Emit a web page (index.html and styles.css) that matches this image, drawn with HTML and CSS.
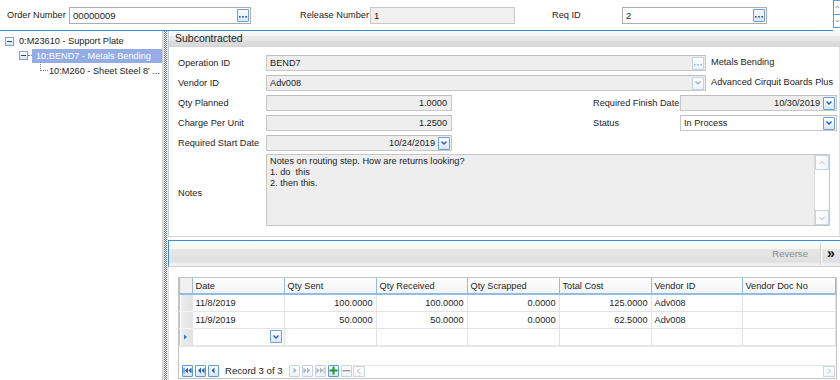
FILE: index.html
```html
<!DOCTYPE html>
<html lang="en">
<head>
<meta charset="utf-8">
<title>Subcontracted</title>
<link rel="stylesheet" href="styles.css">
</head>
<body>
<div class="app">
  <header class="top">
    <div class="topfields">
      <span class="tlbl l-order">Order Number</span>
      <div class="tinput w-order"><span class="val">00000009</span><span class="btn"><svg width="8" height="8" viewBox="0 0 8 8"><rect x="0" y="5" width="1.6" height="1.6" fill="#24508a"/><rect x="3.2" y="5" width="1.6" height="1.6" fill="#24508a"/><rect x="6.4" y="5" width="1.6" height="1.6" fill="#24508a"/></svg></span></div>
      <span class="tlbl l-rel">Release Number</span>
      <div class="tinput ro w-rel"><span class="val">1</span></div>
      <span class="tlbl l-req">Req ID</span>
      <div class="tinput w-req"><span class="val">2</span><span class="btn"><svg width="8" height="8" viewBox="0 0 8 8"><rect x="0" y="5" width="1.6" height="1.6" fill="#24508a"/><rect x="3.2" y="5" width="1.6" height="1.6" fill="#24508a"/><rect x="6.4" y="5" width="1.6" height="1.6" fill="#24508a"/></svg></span></div>
    </div>
    <div class="spin">
      <span class="sp"><svg width="6" height="6" viewBox="0 0 6 6"><polyline points="1,4 3,2 5,4" fill="none" stroke="#4a78b0" stroke-width="1"/></svg></span>
      <span class="sp"><svg width="6" height="6" viewBox="0 0 6 6"><polyline points="1,2 3,4 5,2" fill="none" stroke="#4a78b0" stroke-width="1"/></svg></span>
    </div>
  </header>

  <div class="main">
    <nav class="tree">
      <div class="node n0">
        <span class="exp"><i></i></span>
        <span class="ntext">0:M23610 - Support Plate</span>
      </div>
      <div class="node n1">
        <span class="exp"><i></i></span><span class="dash"></span>
        <span class="ntext sel">10:BEND7 - Metals Bending</span>
      </div>
      <div class="node n2">
        <span class="elbow"></span>
        <span class="ntext">10:M260 - Sheet Steel 8' ...</span>
      </div>
    </nav>
    <div class="splitter"></div>

    <section class="content">
      <div class="group">
        <div class="ghead">Subcontracted</div>
        <div class="gbody">
          <div class="frow">
            <span class="flbl">Operation ID</span>
            <div class="fin w-long"><span class="val">BEND7</span><span class="btn dis"><svg width="8" height="8" viewBox="0 0 8 8"><rect x="0" y="5" width="1.5" height="1.5" fill="#9aaabb"/><rect x="3.2" y="5" width="1.5" height="1.5" fill="#9aaabb"/><rect x="6.4" y="5" width="1.5" height="1.5" fill="#9aaabb"/></svg></span></div>
            <span class="side">Metals Bending</span>
          </div>
          <div class="frow">
            <span class="flbl">Vendor ID</span>
            <div class="fin w-long"><span class="val">Adv008</span><span class="btn dis"><svg width="8" height="8" viewBox="0 0 8 8"><polyline points="1.5,2.5 4,5 6.5,2.5" fill="none" stroke="#9aaabb" stroke-width="1.1"/></svg></span></div>
            <span class="side">Advanced Cirquit Boards Plus</span>
          </div>
          <div class="frow">
            <span class="flbl">Qty Planned</span>
            <div class="fin w-short num"><span class="val">1.0000</span></div>
            <span class="flbl rl">Required Finish Date</span>
            <div class="fin w-right num"><span class="val">10/30/2019</span><span class="btn dd"><svg width="8" height="8" viewBox="0 0 8 8"><polyline points="1.5,2.5 4,5 6.5,2.5" fill="none" stroke="#1f5ea8" stroke-width="1.3"/></svg></span></div>
          </div>
          <div class="frow">
            <span class="flbl">Charge Per Unit</span>
            <div class="fin w-short num"><span class="val">1.2500</span></div>
            <span class="flbl rl">Status</span>
            <div class="fin w-right white"><span class="val">In Process</span><span class="btn dd"><svg width="8" height="8" viewBox="0 0 8 8"><polyline points="1.5,2.5 4,5 6.5,2.5" fill="none" stroke="#1f5ea8" stroke-width="1.3"/></svg></span></div>
          </div>
          <div class="frow">
            <span class="flbl">Required Start Date</span>
            <div class="fin w-short num"><span class="val">10/24/2019</span><span class="btn dd"><svg width="8" height="8" viewBox="0 0 8 8"><polyline points="1.5,2.5 4,5 6.5,2.5" fill="none" stroke="#1f5ea8" stroke-width="1.3"/></svg></span></div>
          </div>
          <div class="nrow">
            <span class="flbl nlbl">Notes</span>
            <div class="notes">
              <div class="ntxt">Notes on routing step. How are returns looking?<br>1. do&nbsp; this<br>2. then this.</div>
              <div class="vscroll">
                <span class="sbtn"><svg width="8" height="8" viewBox="0 0 8 8"><polyline points="1.5,5 4,2.5 6.5,5" fill="none" stroke="#a9b8c8" stroke-width="1"/></svg></span>
                <span class="strack"></span>
                <span class="sbtn"><svg width="8" height="8" viewBox="0 0 8 8"><polyline points="1.5,3 4,5.5 6.5,3" fill="none" stroke="#a9b8c8" stroke-width="1"/></svg></span>
              </div>
            </div>
          </div>
        </div>
      </div>

      <div class="lower">
        <div class="toolbar">
          <span class="tbtn">Reverse</span>
          <span class="tsep"></span>
          <span class="more">&#187;</span>
        </div>
        <div class="gridarea">
          <div class="gridbox">
            <table class="grid">
              <colgroup>
                <col class="c-sel"><col class="c92"><col class="c92"><col class="c91"><col class="c92"><col class="c92"><col class="c91"><col class="c93">
              </colgroup>
              <thead>
                <tr><th class="sel"></th><th>Date</th><th>Qty Sent</th><th>Qty Received</th><th>Qty Scrapped</th><th>Total Cost</th><th>Vendor ID</th><th>Vendor Doc No</th></tr>
              </thead>
              <tbody>
                <tr><td class="sel"></td><td>11/8/2019</td><td class="num">100.0000</td><td class="num">100.0000</td><td class="num">0.0000</td><td class="num">125.0000</td><td>Adv008</td><td></td></tr>
                <tr><td class="sel"></td><td>11/9/2019</td><td class="num">50.0000</td><td class="num">50.0000</td><td class="num">0.0000</td><td class="num">62.5000</td><td>Adv008</td><td></td></tr>
                <tr class="newrow"><td class="sel cur"><svg width="5" height="6" viewBox="0 0 5 6"><polygon points="1,0.5 4,3 1,5.5" fill="#2f78c8"/></svg></td><td class="ddcell"><span class="btn dd"><svg width="8" height="8" viewBox="0 0 8 8"><polyline points="1.5,2.5 4,5 6.5,2.5" fill="none" stroke="#1f5ea8" stroke-width="1.3"/></svg></span></td><td></td><td></td><td></td><td></td><td></td><td></td></tr>
              </tbody>
            </table>
            <div class="navbar">
              <span class="nbtn"><svg width="9" height="7" viewBox="0 0 9 7"><rect x="0.5" y="0.5" width="1" height="6" fill="#2a62a8"/><polygon points="5,0.5 2,3.5 5,6.5" fill="#2a62a8"/><polygon points="8.5,0.5 5.5,3.5 8.5,6.5" fill="#2a62a8"/></svg></span>
              <span class="nbtn"><svg width="8" height="7" viewBox="0 0 8 7"><polygon points="4,0.5 1,3.5 4,6.5" fill="#2a62a8"/><polygon points="7.5,0.5 4.5,3.5 7.5,6.5" fill="#2a62a8"/></svg></span>
              <span class="nbtn"><svg width="5" height="7" viewBox="0 0 5 7"><polygon points="3.5,0.5 0.5,3.5 3.5,6.5" fill="#2a62a8"/></svg></span>
              <span class="rec">Record 3 of 3</span>
              <span class="nbtn off"><svg width="5" height="7" viewBox="0 0 5 7"><polygon points="1.5,0.5 4.5,3.5 1.5,6.5" fill="#a8b6c6"/></svg></span>
              <span class="nbtn off"><svg width="8" height="7" viewBox="0 0 8 7"><polygon points="0.5,0.5 3.5,3.5 0.5,6.5" fill="#a8b6c6"/><polygon points="4,0.5 7,3.5 4,6.5" fill="#a8b6c6"/></svg></span>
              <span class="nbtn off"><svg width="9" height="7" viewBox="0 0 9 7"><polygon points="0.5,0.5 3.5,3.5 0.5,6.5" fill="#a8b6c6"/><polygon points="4,0.5 7,3.5 4,6.5" fill="#a8b6c6"/><rect x="7.5" y="0.5" width="1" height="6" fill="#a8b6c6"/></svg></span>
              <span class="nbtn add"><svg width="9" height="9" viewBox="0 0 9 9"><rect x="3.5" y="0.5" width="2" height="8" fill="#1e9a2a"/><rect x="0.5" y="3.5" width="8" height="2" fill="#1e9a2a"/></svg></span>
              <span class="nbtn off"><svg width="9" height="9" viewBox="0 0 9 9"><rect x="0.5" y="4" width="8" height="1.4" fill="#9a9a9a"/></svg></span>
              <div class="hscroll">
                <span class="hbtn"><svg width="6" height="8" viewBox="0 0 6 8"><polyline points="4,1.5 1.5,4 4,6.5" fill="none" stroke="#aab9ca" stroke-width="1"/></svg></span>
                <span class="htrack"></span>
                <span class="hbtn"><svg width="6" height="8" viewBox="0 0 6 8"><polyline points="2,1.5 4.5,4 2,6.5" fill="none" stroke="#aab9ca" stroke-width="1"/></svg></span>
              </div>
            </div>
          </div>
        </div>
      </div>
    </section>
  </div>
</div>
</body>
</html>
```

FILE: styles.css
```css
* { box-sizing: border-box; margin: 0; padding: 0; }
html, body { width: 840px; height: 380px; overflow: hidden; background: #fff; }
body {
  font-family: "Liberation Sans", Arial, sans-serif;
  font-size: 9.2px;
  color: #1c1c1c;
}
svg { display: block; }

.app { display: flex; flex-direction: column; height: 380px; }

/* ---------- top bar ---------- */
.top { display: flex; height: 31px; flex: none; }
.topfields {
  flex: 1;
  display: flex;
  align-items: center;
  height: 31px;
  padding-left: 7px;
  border-bottom: 1px solid #3a8fd4;
}
.tlbl { flex: none; }
.l-order { width: 62px; }
.l-rel { width: 70px; margin-left: 49px; }
.l-req { width: 70px; margin-left: 37px; }
.tinput {
  flex: none;
  height: 17px;
  display: flex;
  align-items: center;
  padding: 0 1px 0 3px;
  border: 1px solid #abadb3;
  background: #fff;
  font-size: 9.6px;
}
.tinput.ro { background: #f0f0f0; border-color: #c8c8c8; }
.w-order { width: 182px; }
.w-rel { width: 145px; }
.w-req { width: 145px; }

.spin {
  width: 7px;
  height: 28px;
  display: flex;
  flex-direction: column;
  border: 1px solid #5f9bd6;
  border-right: none;
  overflow: hidden;
}
.sp { flex: 1; display: flex; align-items: center; justify-content: flex-start; padding-left: 1px; }
.sp + .sp { border-top: 1px solid #5f9bd6; }

/* buttons */
.btn {
  flex: none;
  margin-left: auto;
  width: 12px;
  height: 13px;
  border: 1px solid #6a9fd7;
  border-radius: 1px;
  background: linear-gradient(#ffffff, #d8e6f6);
  display: flex;
  align-items: center;
  justify-content: center;
}
.btn.dis { border-color: #c2d3e7; background: linear-gradient(#ffffff, #edf2f8); }

/* ---------- main ---------- */
.main { flex: 1; display: flex; min-height: 0; }

.tree {
  width: 163px;
  flex: none;
  border-right: 1px solid #c9c9c9;
  padding-top: 3px;
}
.node { display: flex; align-items: center; height: 14.5px; white-space: nowrap; }
.n0 { padding-left: 5px; }
.n1 { padding-left: 19px; }
.n2 { padding-left: 40px; align-items: flex-start; }
.exp {
  width: 9px;
  height: 9px;
  flex: none;
  border: 1px solid #7f9fc3;
  background: linear-gradient(#ffffff, #d9e5f3);
  display: flex;
  align-items: center;
  justify-content: center;
}
.exp i { display: block; width: 5px; height: 1px; background: #25487a; }
.n0 .ntext { margin-left: 5px; }
.dash { width: 4px; border-top: 1px dotted #808080; flex: none; }
.ntext.sel {
  flex: 1;
  background: #93ace6;
  color: #fff;
  padding-left: 4px;
  height: 14px;
  line-height: 14px;
}
.elbow {
  width: 8px;
  height: 9px;
  flex: none;
  border-left: 1px dotted #808080;
  border-bottom: 1px dotted #808080;
  margin-top: -1px;
}
.n2 .ntext { margin-left: 1px; line-height: 15px; margin-top: 1px; }

.splitter {
  width: 5px;
  flex: none;
  background:
    linear-gradient(90deg, #e6e6e6 0 1px, transparent 1px 4px, #e6e6e6 4px),
    repeating-conic-gradient(#6e6e6e 0 25%, #ffffff 0 50%) 0 0 / 2px 2px;
}

.content { flex: 1; display: flex; flex-direction: column; min-width: 0; }

/* group */
.group { border-left: 1px solid #b5cde6; flex: none; }
.ghead {
  height: 16px;
  padding-left: 6px;
  line-height: 15px;
  font-size: 10.5px;
  color: #222;
  background: linear-gradient(#fbfbfb 0, #f4f4f4 30%, #e9e9e9 35%, #e6e6e6 60%, #dcdcdc 62%, #dadada 94%, #cfcfcf 100%);
}
.gbody {
  padding: 8px 0 10px 9px;
  border-bottom: 1px solid #d6d6d6;
  border-right: 1px solid #e2e2e2;
}
.frow { display: flex; align-items: center; height: 16px; margin-bottom: 4px; white-space: nowrap; }
.flbl { width: 88px; flex: none; }
.fin {
  flex: none;
  height: 16px;
  display: flex;
  align-items: center;
  padding: 0 1px 0 3px;
  border: 1px solid #c7c7c7;
  border-top-color: #bdbdbd;
  background: #eeeeee;
}
.fin.num .val { margin-left: auto; padding-right: 3px; }
.fin.num .btn { margin-left: 0; }
.fin.white { background: #fff; }
.w-long { width: 440px; }
.w-short { width: 186px; }
.w-right { width: 157px; }
.rl { margin-left: 141px; width: 87px; }
.side { margin-left: 5px; margin-top: -3px; }

.nrow { display: flex; align-items: center; margin-top: -1px; }
.nlbl { margin-top: 6px; }
.notes {
  width: 564px;
  height: 72px;
  border: 1px solid #c7c7c7;
  background: #eeeeee;
  display: flex;
}
.ntxt { flex: 1; padding: 1px 3px; line-height: 11px; }
.vscroll { width: 15px; display: flex; flex-direction: column; background: #fff; border-left: 1px solid #dadada; }
.sbtn {
  height: 15px;
  border: 1px solid #c4d5e8;
  background: linear-gradient(90deg, #ffffff, #f1f5fa);
  display: flex;
  align-items: center;
  justify-content: center;
}
.strack { flex: 1; }

/* lower panel */
.lower { flex: 1; margin-top: 3px; display: flex; flex-direction: column; min-height: 0; }
.toolbar {
  height: 27px;
  flex: none;
  display: flex;
  align-items: center;
  justify-content: flex-end;
  border-top: 1px solid #3a8fd4;
  border-left: 1px solid #3a8fd4;
  border-bottom: 1px solid #cdcdcd;
  background: linear-gradient(#ffffff 0, #f7f7f7 30%, #e6e6e6 34%, #e0e0e0 85%, #ededed 88%, #f4f4f4 100%);
}
.tbtn { color: #8c8c8c; font-size: 9.6px; margin-right: 12px; }
.tsep { width: 1px; height: 22px; background: #cfcfcf; box-shadow: 1px 0 0 #fff; margin-right: 6px; }
.more { font-weight: bold; font-size: 14px; color: #111; width: 13px; margin-top: -2px; letter-spacing: -1px; }

.gridarea { flex: 1; padding: 10px 4px 1px 9px; border-left: 1px solid #e0e0e0; display: flex; min-height: 0; }
.gridbox { flex: 1; border: 1px solid #c3c3c3; display: flex; flex-direction: column; }

.grid { border-collapse: collapse; table-layout: fixed; width: 656px; }
.c-sel { width: 13px; }
.c91 { width: 91px; }
.c92 { width: 92px; }
.c93 { width: 93px; }
.grid th {
  height: 16px;
  text-align: left;
  font-weight: normal;
  padding: 0 3px;
  background: linear-gradient(#ffffff, #f3f3f3);
  border-right: 1px solid #8fbde6;
  border-bottom: 2px solid #8fbde6;
  white-space: nowrap;
  overflow: hidden;
}
.grid th.sel { background: linear-gradient(90deg, #9cc4ea 0 1px, #f1f1f1 1px); }
.grid td {
  height: 17px;
  padding: 0 3px;
  border: 1px solid #e3e3e3;
  border-left: none;
  white-space: nowrap;
}
.grid td.num { text-align: right; }
.grid td.sel {
  padding: 0;
  background: linear-gradient(90deg, #a9cbed 0 1px, #ffffff 1px 2px, #ececec 2px, #e2e2e2);
  border-bottom: 1px solid #f8f8f8;
}
.grid td.cur svg { margin-left: 4px; }
.grid tr.newrow td { height: 18px; border-bottom: 2px solid #e6e6e6; }
.ddcell { padding: 0 2px 0 0 !important; }
.ddcell .btn { margin-left: auto; }

.navbar {
  margin-top: auto;
  margin-bottom: 1px;
  padding-left: 3px;
  height: 13px;
  display: flex;
  align-items: center;
}
.nbtn {
  width: 11px;
  height: 12px;
  flex: none;
  margin-right: 2px;
  border: 1px solid #5e9ad6;
  border-radius: 1px;
  background: linear-gradient(#ffffff, #d7e6f7);
  display: flex;
  align-items: center;
  justify-content: center;
}
.nbtn.off { border-color: #c3d3e6; background: linear-gradient(#ffffff, #eef3f9); }
.nbtn.add { border-color: #5e9ad6; }
.rec { margin: 0 6px 0 4px; font-size: 9.6px; white-space: nowrap; }
.hscroll {
  flex: 1;
  height: 12px;
  display: flex;
  margin-left: -1px;
  margin-right: 1px;
  border-top: 1px solid #e5e5e5;
}
.hbtn {
  width: 12px;
  height: 11px;
  border: 1px solid #c6d6e8;
  background: linear-gradient(#ffffff, #f0f5fa);
  display: flex;
  align-items: center;
  justify-content: center;
}
.htrack { flex: 1; }
```
